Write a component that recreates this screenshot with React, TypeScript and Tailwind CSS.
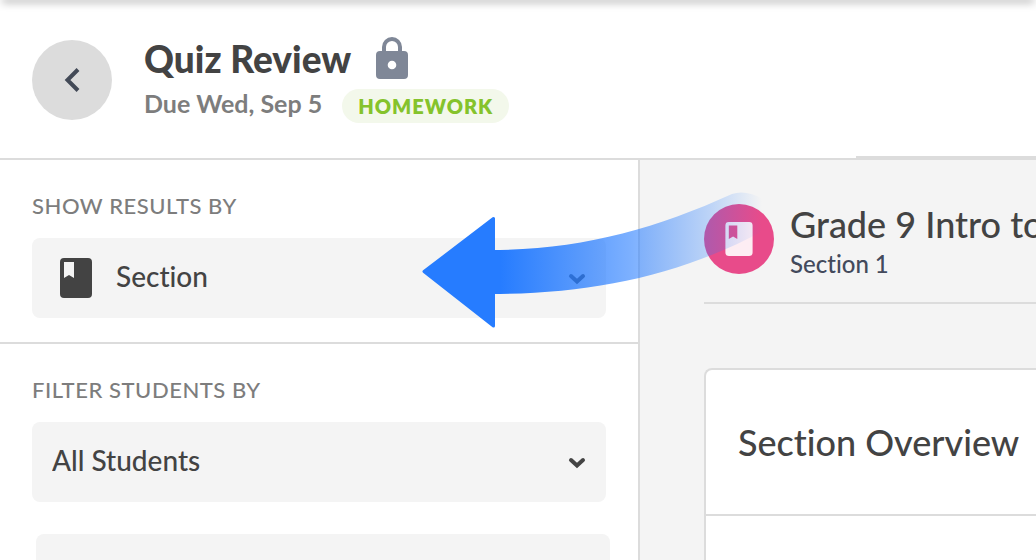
import { useId } from 'react'
import type { ReactNode } from 'react'

function BookIcon({ className }: { className: string }) {
  return (
    <svg viewBox="0 0 32 40" fill="currentColor" fillRule="evenodd" aria-hidden="true" className={className}>
      <path d="M4 0H28a4 4 0 0 1 4 4V36a4 4 0 0 1-4 4H4a4 4 0 0 1-4-4V4a4 4 0 0 1 4-4ZM4 4V20l5-3 5 3V4Z" />
    </svg>
  )
}

function LockIcon() {
  return (
    <svg viewBox="0 1 34 44" role="img" aria-label="Locked" className="h-11 w-[34px] text-[#7f8797]">
      <path d="M9 16V11a8 8 0 0 1 16 0V16" fill="none" stroke="currentColor" strokeWidth="4" />
      <path
        fill="currentColor"
        fillRule="evenodd"
        d="M5 15H29a4 4 0 0 1 4 4V39a4 4 0 0 1-4 4H5a4 4 0 0 1-4-4V19a4 4 0 0 1 4-4ZM17 24.700a4.300 4.300 0 1 0 0 8.600 4.300 4.300 0 0 0 0-8.600Z"
      />
    </svg>
  )
}

function ChevronDown() {
  return (
    <svg viewBox="0 0 18 14" fill="none" stroke="currentColor" strokeWidth="4" strokeLinecap="round" aria-hidden="true" className="h-3.5 w-[18px]">
      <path d="M3 5l6 5.500 6-5.500" />
    </svg>
  )
}

interface SelectFieldProps {
  label: string
  options: string[]
  icon?: ReactNode
}

function SelectField({ label, options, icon }: SelectFieldProps) {
  const id = useId()
  return (
    <div className="flex flex-col gap-[18px]">
      <label htmlFor={id} className="text-[22px] leading-7 font-medium tracking-wide text-[#7d7d7d] uppercase">
        {label}
      </label>
      <div className="relative">
        <select
          id={id}
          className={`h-20 w-full cursor-pointer appearance-none rounded-lg bg-[#f4f4f4] pr-14 pb-1 text-[28px] font-medium text-[#434343] ${icon ? 'pl-[84px]' : 'pl-5'}`}
        >
          {options.map((option) => (
            <option key={option}>{option}</option>
          ))}
        </select>
        <div className="pointer-events-none absolute inset-y-0 left-7 flex items-center">{icon}</div>
        <div className="pointer-events-none absolute inset-y-0 right-5 flex items-center text-[#434343]">
          <ChevronDown />
        </div>
      </div>
    </div>
  )
}

function Header() {
  return (
    <header className="flex justify-between border-b-2 border-[#dcdcdc]">
      <div className="flex items-center gap-8 pt-0.5 pl-8">
        <button type="button" aria-label="Back" className="flex size-20 items-center justify-center rounded-full bg-[#dcdcdc] text-[#434a57]">
          <svg viewBox="0 0 16 24" fill="none" stroke="currentColor" strokeWidth="4" className="h-6 w-4">
            <path d="M14 1.500L3.500 12 14 22.500" />
          </svg>
        </button>
        <div>
          <div className="flex items-center gap-6">
            <h1 className="text-[37px] leading-11 font-black text-[#434343]">Quiz Review</h1>
            <LockIcon />
          </div>
          <div className="flex items-start gap-5 pt-1.5">
            <p className="text-[25px] leading-8 font-bold text-[#7d7d7d]">Due Wed, Sep 5</p>
            <span className="mt-0.5 rounded-full bg-[#f3f8eb] px-4 text-xl leading-[34px] font-extrabold tracking-wider text-[#85c32c]">HOMEWORK</span>
          </div>
        </div>
      </div>
      <div className="h-[158px] w-[180px] border-b-2 border-[#dcdcdc]" />
    </header>
  )
}

function Sidebar() {
  return (
    <aside className="w-[640px] shrink-0 border-r-2 border-[#dcdcdc] bg-white">
      <section className="border-b-2 border-[#dcdcdc] px-8 pt-8 pb-6">
        <SelectField label="Show results by" options={['Section', 'Student']} icon={<BookIcon className="h-10 w-8 text-[#434343]" />} />
      </section>
      <section className="px-8 pt-8">
        <SelectField label="Filter students by" options={['All Students']} />
        <div className="mt-8 ml-1 h-20 w-full rounded-lg bg-[#f4f4f4]" />
      </section>
    </aside>
  )
}

function Results() {
  return (
    <main className="min-w-0 grow bg-[#f4f4f4] pl-16">
      <div className="flex items-start gap-4 border-b-2 border-[#dcdcdc] pt-11 pb-[22px]">
        <div className="flex size-[70px] shrink-0 items-center justify-center rounded-full bg-[#e84b8a]">
          <BookIcon className="h-[34px] w-7 text-white/90" />
        </div>
        <div className="whitespace-nowrap">
          <h2 className="text-4xl leading-10 font-medium text-[#434343]">Grade 9 Intro to</h2>
          <p className="pt-1 text-2xl leading-8 font-medium text-[#434a5c]">Section 1</p>
        </div>
      </div>
      <div className="mt-16 h-full rounded-tl-lg border-2 border-r-0 border-[#dcdcdc] bg-white">
        <h3 className="border-b-2 border-[#dcdcdc] py-[50px] pl-8 text-4xl leading-11 font-medium whitespace-nowrap text-[#434343]">Section Overview</h3>
      </div>
    </main>
  )
}

// Callout arrow that floats over the sidebar and the results
function Arrow() {
  return (
    <svg viewBox="0 0 360 150" aria-hidden="true" className="pointer-events-none absolute top-[180px] left-[410px] h-[150px] w-[360px]">
      <defs>
        <linearGradient id="tail" gradientUnits="userSpaceOnUse" x1="90" y1="0" x2="352" y2="0">
          <stop offset="0" stopColor="#267cff" />
          <stop offset="0.5" stopColor="#267cff" stopOpacity="0.6" />
          <stop offset="0.8" stopColor="#267cff" stopOpacity="0.27" />
          <stop offset="1" stopColor="#267cff" stopOpacity="0" />
        </linearGradient>
      </defs>
      <path d="M80 70C168 70 243 50 322 14Q336 9 355 20V50C268 97 178 114 80 114Z" fill="url(#tail)" />
      <path
        d="M83.500 38.500V146L14 91.500Z"
        fill="#267cff"
        stroke="#267cff"
        strokeWidth="3"
        strokeLinejoin="round"
      />
    </svg>
  )
}

export default function App() {
  return (
    <div className="relative flex h-screen flex-col overflow-hidden bg-white font-[Lato,sans-serif] [font-variant-ligatures:none]">
      <div className="absolute inset-x-1 top-0 shadow-[0_0_9px_2px_rgba(0,0,0,0.4)]" />
      <Header />
      <div className="flex grow">
        <Sidebar />
        <Results />
      </div>
      <Arrow />
    </div>
  )
}
